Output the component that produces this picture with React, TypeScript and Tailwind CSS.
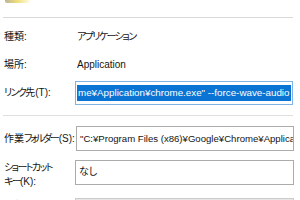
import React from "react";

const font = "font-['Liberation_Sans','Noto_Sans_CJK_JP',sans-serif] [font-feature-settings:'palt']";

function K({ children }: { children: React.ReactNode }) {
  return <span className="tracking-[-1.6px]">{children}</span>;
}

export default function App() {
  return (
    <div className={`w-[300px] h-[200px] overflow-hidden bg-white text-[10px] leading-[14px] text-[#141414] ${font}`}>
      <div className="h-[17px]">
        <div className="ml-[5px] h-[3px] w-[25px] rounded-b-[2px] bg-gradient-to-r from-[#bdb595] via-[#f0df78] to-[#fffbe6]" />
      </div>
      <div className="mx-[3px] mr-[7px] h-px bg-[#d9d9d9]" />
      <div className="flex h-[38px] items-center">
        <div className="w-[77px] flex-none pl-[4px]">種類:</div>
        <div><K>アプリケーショ</K>ン</div>
      </div>
      <div className="flex h-[18px] items-center">
        <div className="w-[77px] flex-none pl-[4px]">場所:</div>
        <div>Application</div>
      </div>
      <div className="mt-[7px] flex items-center">
        <div className="w-[75px] flex-none whitespace-nowrap pl-[4px]"><K>リンク</K>先(T):</div>
        <div className="flex h-[24px] w-[218px] flex-none items-center overflow-hidden border border-[#7fb2e5] pl-[1px]">
          <span className="whitespace-nowrap bg-[#0a74d4] px-[1px] text-[9.8px] leading-[16px] text-white">
            me¥Application¥chrome.exe" --force-wave-audio
          </span>
        </div>
      </div>
      <div className="mx-[3px] mr-[7px] mt-[10px] h-px bg-[#e0e0e0]" />
      <div className="mt-[10px] flex items-center">
        <div className="w-[76px] flex-none whitespace-nowrap pl-[4px]">
          作業<span className="tracking-[-2.2px]">フォルダ</span><span className="tracking-[-1px]">ー</span>(S):
        </div>
        <div className="flex h-[25px] w-[218px] flex-none items-center overflow-hidden whitespace-nowrap border border-[#ababab] pl-[3px] text-[9.6px]">
          "C:¥Program Files (x86)¥Google¥Chrome¥Application"
        </div>
      </div>
      <div className="mt-[9px] flex items-start">
        <div className="w-[75px] flex-none pl-[4px] pt-[1px] leading-[14px]">
          <K>ショートカット</K>
          <br />
          <K>キー</K>(K):
        </div>
        <div className="h-[25px] w-[219px] flex-none border border-[#ababab] pl-[3px] pt-[4px]">なし</div>
      </div>
      <div className="mt-[9px] flex items-start">
        <div className="w-[75px] flex-none pl-[4px] pt-[1px]">実行時の</div>
        <div className="h-[20px] w-[219px] flex-none border border-[#cccccc] bg-[#e6e6e6]" />
      </div>
    </div>
  );
}
